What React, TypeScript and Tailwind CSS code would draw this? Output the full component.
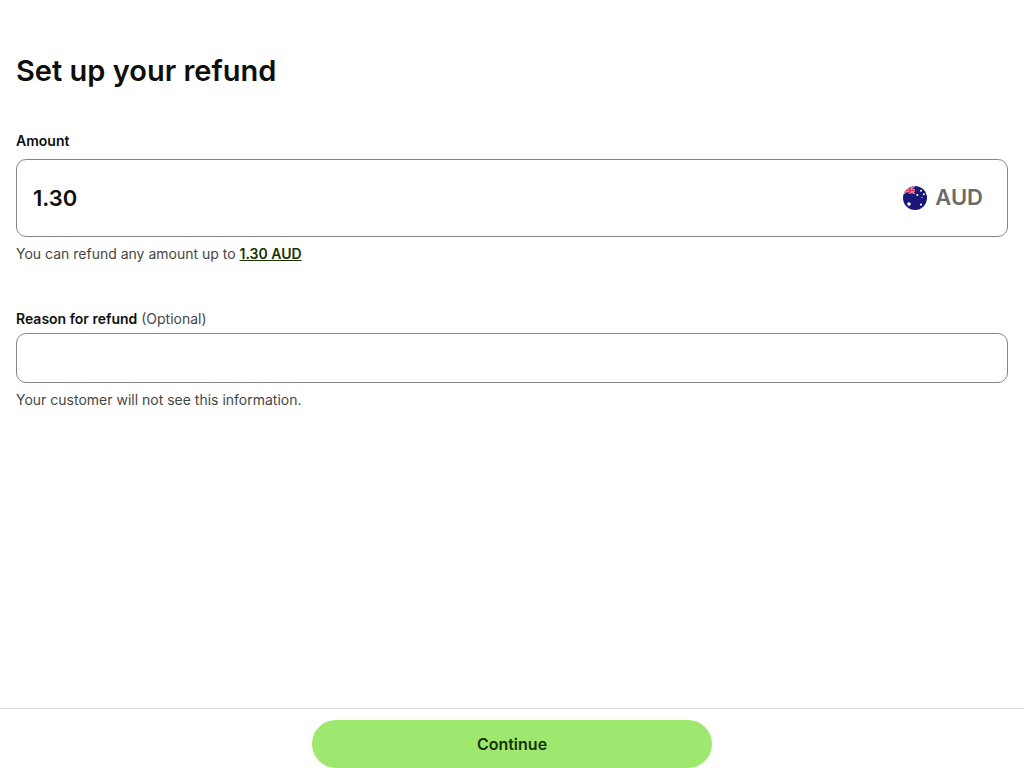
import { useState } from "react";

function AustraliaFlag() {
  return (
    <svg viewBox="0 0 24 24" className="size-6 shrink-0" aria-hidden="true">
      <clipPath id="flag-circle">
        <circle cx="12" cy="12" r="12" />
      </clipPath>
      <clipPath id="flag-canton">
        <rect width="12" height="8" />
      </clipPath>
      <g clipPath="url(#flag-circle)">
        <rect width="24" height="24" fill="#1a1877" />
        <g clipPath="url(#flag-canton)">
          <path d="M0 0L12 8M12 0L0 8" stroke="#fff" strokeWidth="1.4" />
          <path d="M0 0L12 8M12 0L0 8" stroke="#f0425c" strokeWidth="0.9" />
          <path d="M7 0V8M0 4.5H12" stroke="#fff" strokeWidth="2.6" />
          <path d="M7 0V8M0 4.5H12" stroke="#f0304c" strokeWidth="2" />
        </g>
        <g fill="#fff">
          <circle cx="6" cy="18" r="1.8" />
          <circle cx="18" cy="4.8" r="1" />
          <circle cx="14.3" cy="9" r="1" />
          <circle cx="20.8" cy="8.3" r="1" />
          <circle cx="18" cy="18.6" r="1.1" />
          <circle cx="19" cy="11.5" r="0.6" />
        </g>
      </g>
    </svg>
  );
}

export default function App() {
  const [amount, setAmount] = useState("1.30");
  const [reason, setReason] = useState("");

  return (
    <div className="flex min-h-screen flex-col bg-white font-['Inter',sans-serif] text-sm text-[#454745]">
      <main className="flex-1 px-4 pt-[51px]">
        <h1 className="text-[29px] leading-10 font-semibold text-[#0e0f0c]">Set up your refund</h1>
        <div className="mt-10 flex flex-col">
          <label htmlFor="amount" className="leading-5 font-semibold text-[#0e0f0c]">Amount</label>
          <div className="mt-2 flex h-[78px] items-center rounded-[10px] border border-[#868685] pr-6">
            <input
              id="amount"
              inputMode="decimal"
              value={amount}
              onChange={(e) => setAmount(e.target.value)}
              className="h-full min-w-0 flex-1 rounded-[10px] px-4 text-[22px] font-semibold text-[#0e0f0c] outline-none"
            />
            <AustraliaFlag />
            <span className="ml-2 text-[22px] font-semibold text-[#6a6c6a]">AUD</span>
          </div>
          <p className="mt-[7px] leading-5">
            You can refund any amount up to{" "}
            <button type="button" onClick={() => setAmount("1.30")} className="font-semibold text-[#163300] underline">
              1.30 AUD
            </button>
          </p>
        </div>
        <div className="mt-[45px] flex flex-col">
          <label htmlFor="reason" className="leading-5">
            <span className="font-semibold text-[#0e0f0c]">Reason for refund</span> (Optional)
          </label>
          <input
            id="reason"
            value={reason}
            onChange={(e) => setReason(e.target.value)}
            className="mt-1 h-[50px] rounded-[10px] border border-[#868685] px-4 text-base text-[#0e0f0c] outline-none"
          />
          <p className="mt-[7px] leading-5">Your customer will not see this information.</p>
        </div>
      </main>
      <footer className="flex justify-center border-t border-[#dddedd] pt-[11px]">
        <button type="button" className="h-12 w-full max-w-[400px] rounded-full bg-[#9fe870] text-base font-semibold text-[#163300]">
          Continue
        </button>
      </footer>
    </div>
  );
}
